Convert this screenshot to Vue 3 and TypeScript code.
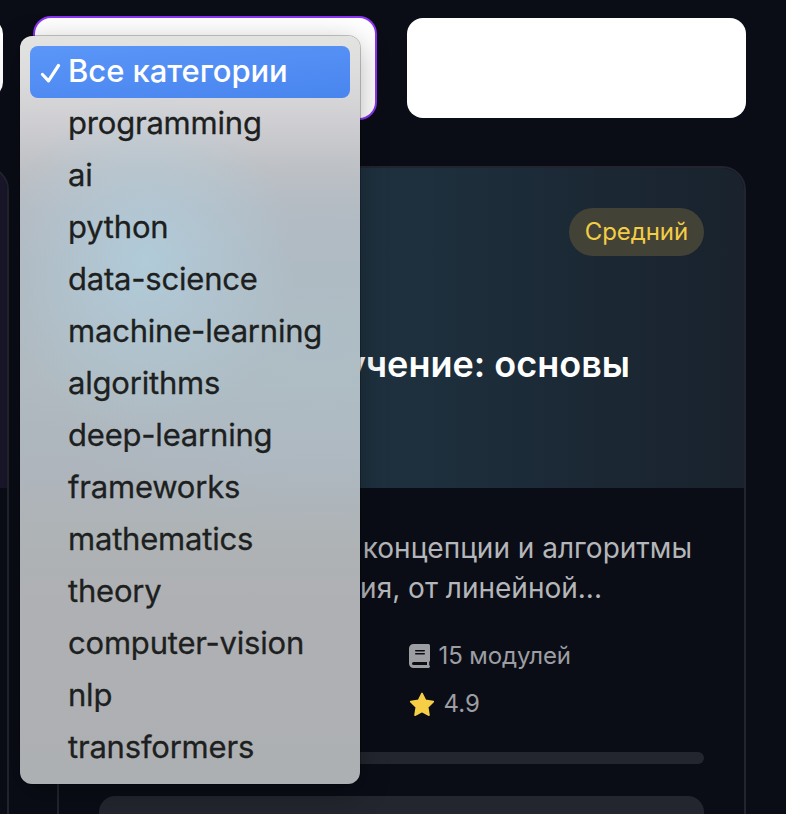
<script setup lang="ts">
import { ref } from 'vue'

const selected = ref('Все категории')
const categories: string[] = [
  'Все категории',
  'programming',
  'ai',
  'python',
  'data-science',
  'machine-learning',
  'algorithms',
  'deep-learning',
  'frameworks',
  'mathematics',
  'theory',
  'computer-vision',
  'nlp',
  'transformers',
]
</script>

<template>
  <main class="page">
    <div class="filters">
      <div class="field search"></div>
      <div class="field focused"></div>
      <div class="field"></div>
    </div>

    <div class="cards">
      <article class="card">
        <div class="cover violet"></div>
      </article>
      <article class="card">
        <header class="cover teal">
          <span class="badge">Средний</span>
          <h3 class="title">обучение: основы</h3>
        </header>
        <div class="body">
          <p class="desc">
            <span class="line first">концепции и алгоритмы</span>
            <span class="line second">обучения, от линейной...</span>
          </p>
          <div class="meta">
            <span class="stat modules">
              <svg class="book" viewBox="0 0 21 24">
                <path
                  fill="currentColor"
                  fill-rule="evenodd"
                  d="M4.5 0H19.5Q21 0 21 1.5V16.2Q21 17.3 20.2 17.8V21.2Q21 21.6 21 22.5T19.8 24H4.5A4.5 4.5 0 0 1 0 19.5V4.5A4.5 4.5 0 0 1 4.5 0ZM6.7 6A.7.7 0 0 0 6.7 7.4H15.3A.7.7 0 0 0 15.3 6ZM6.7 9.1A.7.7 0 0 0 6.7 10.5H15.3A.7.7 0 0 0 15.3 9.1ZM4.5 18A1.5 1.5 0 0 0 4.5 21H18V18Z"
                />
              </svg>
              <span>15 модулей</span>
            </span>
            <span class="stat rating">
              <svg class="star" viewBox="0 0 26 25">
                <path
                  fill="#f6cf46"
                  stroke="#f6cf46"
                  stroke-width="1.6"
                  stroke-linejoin="round"
                  d="M13 1.4L16.5 8.4L24.3 9.6L18.7 15.1L20 23.2L13 19.5L6 23.2L7.3 15.1L1.7 9.6L9.5 8.4Z"
                />
              </svg>
              <span>4.9</span>
            </span>
          </div>
          <div class="progress"></div>
          <div class="action"></div>
        </div>
      </article>
    </div>

    <ul class="menu">
      <li
        v-for="category in categories"
        :key="category"
        class="option"
        :class="{ active: category === selected }"
        @click="selected = category"
      >
        <svg v-if="category === selected" class="check" viewBox="0 0 22 20">
          <path d="M2.5 11.5L8.5 17.8L18.5 2.5" fill="none" stroke="#fff" stroke-width="3.2" stroke-linecap="round" stroke-linejoin="round" />
        </svg>
        <span class="label">{{ category }}</span>
      </li>
    </ul>
  </main>
</template>

<style>
body {
  margin: 0;
  background: #0a0d16;
}
</style>

<style scoped>
.page {
  position: relative;
  box-sizing: border-box;
  width: 786px;
  height: 814px;
  padding-top: 18px;
  overflow: hidden;
  background: #0a0d16;
  font-family: Inter, "Liberation Sans", sans-serif;
}
.filters {
  display: grid;
  grid-template-columns: 340px 340px 339px;
  gap: 32px;
  width: 1083px;
  margin-left: -337px;
}
.field {
  height: 100px;
  border-radius: 16px;
  background: #fff;
}
.search {
  height: 80px;
}
.focused {
  box-shadow: 0 0 0 2px #8b35f5;
}
.cards {
  display: grid;
  grid-template-columns: 689px 689px;
  gap: 48px;
  margin: 48px 0 0 -680px;
}
.card {
  box-sizing: border-box;
  height: 900px;
  border: 2px solid #23252e;
  border-radius: 24px;
  overflow: hidden;
}
.cover {
  display: flex;
  flex-direction: column;
  box-sizing: border-box;
  height: 320px;
  padding: 40px;
}
.violet {
  background: #19162b;
}
.teal {
  background: linear-gradient(90deg, #1f3a49 0%, #1e303e 50%, #19222d 100%);
}
.badge {
  align-self: flex-end;
  padding: 0 16px;
  border-radius: 24px;
  background: #434236;
  color: #f4cd46;
  font-size: 24px;
  line-height: 48px;
  letter-spacing: -0.1px;
}
.title {
  align-self: flex-end;
  margin: 83px 74px 0 0;
  color: #fff;
  font-size: 36px;
  font-weight: 600;
  line-height: 50px;
}
.body {
  padding: 40px;
}
.desc {
  display: flex;
  flex-direction: column;
  align-items: flex-end;
  margin: 0 0 32px;
  color: #b5b6b9;
  font-size: 28px;
  line-height: 40px;
}
.first {
  margin-right: 12px;
}
.second {
  margin-right: 102px;
}
.meta {
  display: grid;
  grid-template-columns: 1fr 1fr;
  gap: 16px;
  color: #9d9ea2;
  font-size: 24px;
  line-height: 32px;
}
.stat {
  display: flex;
  grid-column: 2;
  align-items: center;
  gap: 9px;
  margin-left: -1px;
}
.modules {
  letter-spacing: -0.1px;
}
.book {
  width: 21px;
  height: 24px;
}
.star {
  width: 26px;
  height: 25px;
}
.progress {
  height: 12px;
  margin-top: 32px;
  border-radius: 6px;
  background: #23262e;
}
.action {
  height: 80px;
  margin-top: 32px;
  border-radius: 16px;
  background: #23262e;
}
.menu {
  position: absolute;
  top: 36px;
  left: 20px;
  box-sizing: border-box;
  width: 340px;
  height: 748px;
  margin: 0;
  padding: 10px;
  list-style: none;
  border-radius: 12px;
  background:
    radial-gradient(ellipse 150px 170px at 125px 225px, rgba(177, 204, 218, 0.95), rgba(177, 204, 218, 0)),
    radial-gradient(ellipse 300px 200px at 300px 310px, rgba(174, 190, 199, 0.8), rgba(174, 190, 199, 0)),
    linear-gradient(180deg, #e3e3e1 0, #dcdcdd 40px, #cfcfd3 85px, #bfc1c5 130px, #b5bac2 175px, #b0b8c0 230px, #b0bac0 340px, #aeb5bd 430px, #aeb3b5 500px, #afb0b3 570px, #adb0b3 748px);
  box-shadow:
    0 0 0 1px rgba(0, 0, 0, 0.22),
    0 8px 30px rgba(0, 0, 0, 0.3);
}
.option {
  display: flex;
  position: relative;
  align-items: center;
  height: 52px;
  padding-left: 38px;
  border-radius: 8px;
  color: #1d1f20;
  font-size: 31px;
  font-weight: 400;
  line-height: 50px;
  letter-spacing: -0.2px;
  white-space: nowrap;
  -webkit-text-stroke: 0.3px currentColor;
}
.label {
  height: 52px;
}
.active {
  background: linear-gradient(175deg, #5b96f8, #4885ee);
  color: #fff;
  font-weight: 500;
  letter-spacing: -0.05px;
  -webkit-text-stroke: 0;
}
.check {
  position: absolute;
  top: 17px;
  left: 10px;
  width: 22px;
  height: 20px;
}
</style>
